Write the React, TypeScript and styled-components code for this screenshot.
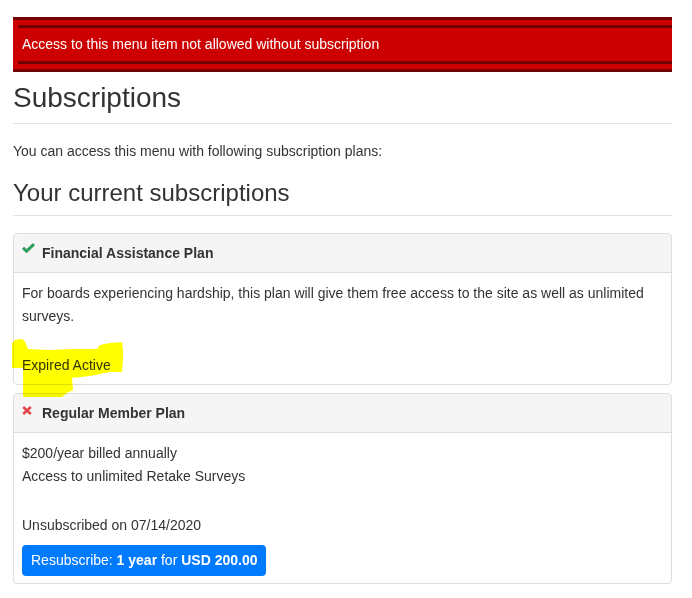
import React from "react";
import styled, { createGlobalStyle } from "styled-components";

const GlobalStyle = createGlobalStyle`
  html, body {
    margin: 0;
    padding: 0;
    background: #ffffff;
  }
  body {
    font-family: "Liberation Sans", Arial, Helvetica, sans-serif;
    font-size: 14px;
    color: #333333;
  }
  * { box-sizing: border-box; }
`;

const Page = styled.div`
  position: relative;
  padding: 17px 20px 0 13px;
`;

const Banner = styled.div`
  background: #cc0000;
  border-top: 3px solid #730000;
  border-bottom: 3px solid #730000;
  padding: 5px 0 5px 5px;
`;

const BannerInner = styled.div`
  border-top: 3px solid #730000;
  border-bottom: 3px solid #730000;
  padding: 6px 4px 7px;
  color: #ffffff;
  line-height: 20px;
  font-size: 14px;
`;

const PageTitle = styled.h1`
  margin: 11px 0 0;
  font-size: 28px;
  font-weight: 400;
  line-height: 1.1;
  color: #333333;
  padding-bottom: 9px;
  border-bottom: 1px solid #e3e3e3;
`;

const Intro = styled.p`
  margin: 17px 0 0;
  line-height: 20px;
`;

const SectionTitle = styled.h2`
  margin: 19px 0 0;
  font-size: 24px;
  font-weight: 400;
  line-height: 1.1;
  color: #333333;
  padding-bottom: 9px;
  border-bottom: 1px solid #e3e3e3;
`;

const CardList = styled.div`
  margin-top: 17px;
  display: flex;
  flex-direction: column;
  gap: 8px;
`;

const Card = styled.section`
  border: 1px solid #dddddd;
  border-radius: 4px;
  background: #ffffff;
  overflow: hidden;
`;

const CardHeader = styled.header`
  display: flex;
  align-items: flex-start;
  gap: 6px;
  background: #f5f5f5;
  border-bottom: 1px solid #dddddd;
  padding: 10px 8px;
  line-height: 18px;
`;

const IconBox = styled.span<{ $offset: number }>`
  width: 14px;
  flex: 0 0 14px;
  display: flex;
  margin-top: ${(p) => p.$offset}px;
`;

const CardTitle = styled.h3`
  margin: 0;
  font-size: 14px;
  font-weight: 700;
  color: #333333;
  line-height: 18px;
`;

const CardBody = styled.div`
  padding: 9px 8px 7px;
  line-height: 23px;
`;

const Description = styled.div`
  margin: 0 0 26px;
`;

const Line = styled.p`
  margin: 0;
`;

const ButtonRow = styled.div`
  display: flex;
  margin-top: 8px;
`;

const PrimaryButton = styled.button`
  font-family: "Liberation Sans", Arial, Helvetica, sans-serif;
  font-size: 14px;
  line-height: 19px;
  color: #ffffff;
  background: #007bff;
  border: none;
  border-radius: 4px;
  padding: 6px 9px;
  cursor: pointer;
  b { font-weight: 700; }
`;

const Highlight = styled.svg`
  position: absolute;
  left: 10px;
  top: 338px;
  width: 116px;
  height: 62px;
  mix-blend-mode: multiply;
  pointer-events: none;
`;

const CheckIcon = () => (
  <svg width="13" height="10" viewBox="0 0 13 10">
    <polyline
      points="1,4.8 4.6,8.2 12,1.2"
      fill="none"
      stroke="#2e9e5b"
      strokeWidth="3"
      strokeLinejoin="miter"
    />
  </svg>
);

const CrossIcon = () => (
  <svg width="10" height="9" viewBox="0 0 10 9">
    <path d="M1.2 1 L8.8 8 M8.8 1 L1.2 8" stroke="#e0464b" strokeWidth="2.6" fill="none" />
  </svg>
);

export default function App() {
  return (
    <>
      <GlobalStyle />
      <Page>
        <Banner>
          <BannerInner>Access to this menu item not allowed without subscription</BannerInner>
        </Banner>
        <PageTitle>Subscriptions</PageTitle>
        <Intro>You can access this menu with following subscription plans:</Intro>
        <SectionTitle>Your current subscriptions</SectionTitle>
        <CardList>
          <Card>
            <CardHeader>
              <IconBox $offset={-1}>
                <CheckIcon />
              </IconBox>
              <CardTitle>Financial Assistance Plan</CardTitle>
            </CardHeader>
            <CardBody>
              <Description>
                <Line>
                  For boards experiencing hardship, this plan will give them free access to the site as well as
                  unlimited surveys.
                </Line>
              </Description>
              <Line>Expired Active</Line>
            </CardBody>
          </Card>
          <Card>
            <CardHeader>
              <IconBox $offset={2}>
                <CrossIcon />
              </IconBox>
              <CardTitle>Regular Member Plan</CardTitle>
            </CardHeader>
            <CardBody>
              <Description>
                <Line>$200/year billed annually</Line>
                <Line>Access to unlimited Retake Surveys</Line>
              </Description>
              <Line>Unsubscribed on 07/14/2020</Line>
              <ButtonRow>
                <PrimaryButton type="button">
                  Resubscribe: <b>1 year</b> for <b>USD 200.00</b>
                </PrimaryButton>
              </ButtonRow>
            </CardBody>
          </Card>
        </CardList>
        <Highlight viewBox="0 0 116 62">
          <polygon
            fill="#ffff00"
            points="2,5 5,2 10,1 14,2 16,6 18,11 40,12 62,11 87,11 90,7 100,5 112,4 113,12 113,22 112,34 100,34 80,38 62,40 63,52 57,55 52,59 13,59 13,44 13,30 2,30 2,18"
          />
        </Highlight>
      </Page>
    </>
  );
}
